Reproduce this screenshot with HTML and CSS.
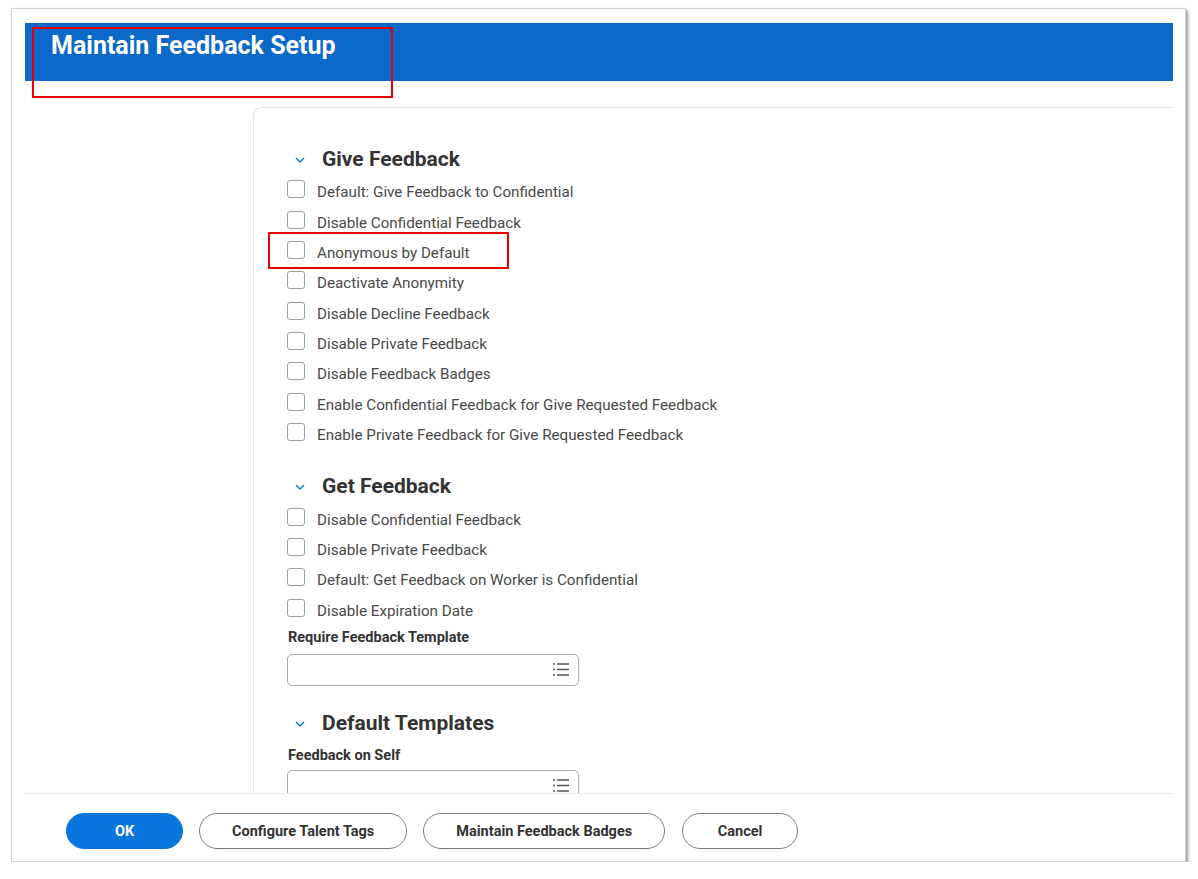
FILE: index.html
```html
<!DOCTYPE html>
<html lang="en">
<head>
  <meta charset="UTF-8">
  <title>Maintain Feedback Setup</title>
  <link rel="stylesheet" href="styles.css">
</head>
<body>

  <div class="frame">
    <header class="page-head">
      <h1>Maintain Feedback Setup</h1>
    </header>

    <div class="page-body">
      <div class="card">

        <!-- Give Feedback -->
        <section class="group">
          <h2 class="group-title">
            <svg class="chevron" viewBox="0 0 10 6"><path d="M1 1l4 4 4-4"/></svg>
            Give Feedback
          </h2>
          <label class="check"><span class="box"></span>Default: Give Feedback to Confidential</label>
          <label class="check"><span class="box"></span>Disable Confidential Feedback</label>
          <label class="check"><span class="box"></span>Anonymous by Default</label>
          <label class="check"><span class="box"></span>Deactivate Anonymity</label>
          <label class="check"><span class="box"></span>Disable Decline Feedback</label>
          <label class="check"><span class="box"></span>Disable Private Feedback</label>
          <label class="check"><span class="box"></span>Disable Feedback Badges</label>
          <label class="check"><span class="box"></span>Enable Confidential Feedback for Give Requested Feedback</label>
          <label class="check"><span class="box"></span>Enable Private Feedback for Give Requested Feedback</label>
        </section>

        <!-- Get Feedback -->
        <section class="group">
          <h2 class="group-title">
            <svg class="chevron" viewBox="0 0 10 6"><path d="M1 1l4 4 4-4"/></svg>
            Get Feedback
          </h2>
          <label class="check"><span class="box"></span>Disable Confidential Feedback</label>
          <label class="check"><span class="box"></span>Disable Private Feedback</label>
          <label class="check"><span class="box"></span>Default: Get Feedback on Worker is Confidential</label>
          <label class="check"><span class="box"></span>Disable Expiration Date</label>
          <div class="field-label first">Require Feedback Template</div>
          <div class="prompt">
            <svg class="list-icon" viewBox="0 0 16 13"><path d="M0 1h2M0 6.5h2M0 12h2M4 1h12M4 6.5h12M4 12h12"/></svg>
          </div>
        </section>

        <!-- Default Templates -->
        <section class="group last">
          <h2 class="group-title">
            <svg class="chevron" viewBox="0 0 10 6"><path d="M1 1l4 4 4-4"/></svg>
            Default Templates
          </h2>
          <div class="field-label">Feedback on Self</div>
          <div class="prompt">
            <svg class="list-icon" viewBox="0 0 16 13"><path d="M0 1h2M0 6.5h2M0 12h2M4 1h12M4 6.5h12M4 12h12"/></svg>
          </div>
        </section>

      </div>
    </div>

    <footer class="page-foot">
      <button class="btn btn-primary">OK</button>
      <button class="btn">Configure Talent Tags</button>
      <button class="btn">Maintain Feedback Badges</button>
      <button class="btn btn-cancel">Cancel</button>
    </footer>

    <!-- marcações em vermelho -->
    <div class="mark mark-title"></div>
    <div class="mark mark-anon"></div>
  </div>

</body>
</html>
```

FILE: styles.css
```css
/* Geral */
body {
  margin: 0;
  background-color: #fff;
  font-family: Roboto, "Liberation Sans", Arial, sans-serif;
  color: #333;
}

/* Moldura da captura */
.frame {
  position: relative;
  margin: 8px 0 0 11px;
  width: 1175px;
  height: 854px;
  box-sizing: border-box;
  border: 1px solid #d2d2d2;
  box-shadow: 2px 2px 3px rgba(0, 0, 0, 0.4);
  padding: 14px 12px 0 13px;
  display: flex;
  flex-direction: column;
}

/* Cabeçalho azul */
.page-head {
  height: 58px;
  flex-shrink: 0;
  background-color: #0a68c9;
  padding: 9px 0 0 26px;
  box-sizing: border-box;
}

.page-head h1 {
  margin: 0;
  font-size: 25px;
  line-height: 28px;
  font-weight: bold;
  color: #fff;
}

/* Corpo */
.page-body {
  flex: 1;
  overflow: hidden;
  display: flex;
  padding: 26px 0 0 228px;
}

.card {
  flex: 1;
  border-top: 1px solid #e1e4e8;
  border-left: 1px solid #e1e4e8;
  border-top-left-radius: 8px;
  padding: 35px 0 0 33px;
}

.group + .group {
  margin-top: 22px;
}

.group.last {
  margin-top: 21px;
}

.group-title {
  display: flex;
  align-items: center;
  height: 32px;
  margin: 0;
  font-size: 21px;
  font-weight: bold;
  color: #333;
}

.chevron {
  width: 10px;
  height: 6px;
  margin: 2px 17px 0 8px;
  fill: none;
  stroke: #0875e1;
  stroke-width: 1.4;
}

.check {
  display: flex;
  align-items: center;
  gap: 12px;
  height: 30.375px;
  box-sizing: border-box;
  padding-top: 4px;
  font-size: 15.2px;
  color: #494949;
}

.box {
  width: 18px;
  height: 18px;
  flex-shrink: 0;
  box-sizing: border-box;
  border: 1px solid #9aa0a6;
  border-radius: 3px;
  margin-top: -6px;
}

.field-label {
  margin: 7px 0 4px 1px;
  height: 20px;
  line-height: 20px;
  font-size: 14.5px;
  font-weight: bold;
  color: #333;
}

.field-label.first {
  margin: 4px 0 6px 1px;
}

.prompt {
  width: 292px;
  height: 32px;
  box-sizing: border-box;
  border: 1px solid #a8a8a8;
  border-radius: 5px;
  display: flex;
  align-items: center;
  justify-content: flex-end;
  padding-right: 9px;
}

.list-icon {
  width: 16px;
  height: 13px;
  fill: none;
  stroke: #555;
  stroke-width: 1.5;
}

/* Rodapé */
.page-foot {
  height: 68px;
  flex-shrink: 0;
  box-sizing: border-box;
  border-top: 1px solid #ececec;
  padding: 19px 0 0 41px;
  display: flex;
  align-items: flex-start;
  gap: 16px;
}

.btn {
  height: 36px;
  padding: 0 32px;
  border: 1.5px solid #7d7d7d;
  border-radius: 18px;
  background-color: #fff;
  font-family: Roboto, "Liberation Sans", Arial, sans-serif;
  font-size: 14.5px;
  font-weight: bold;
  color: #333;
}

.btn-primary {
  width: 117px;
  border-color: #0b75de;
  background-color: #0b75de;
  color: #fff;
}

.btn-cancel {
  width: 116px;
  margin-left: 1px;
}

/* Marcações vermelhas */
.mark {
  position: absolute;
  border: 2px solid #e60000;
  box-sizing: border-box;
}

.mark-title {
  left: 20px;
  top: 18px;
  width: 361px;
  height: 71px;
}

.mark-anon {
  left: 256px;
  top: 223px;
  width: 241px;
  height: 37px;
}
```
